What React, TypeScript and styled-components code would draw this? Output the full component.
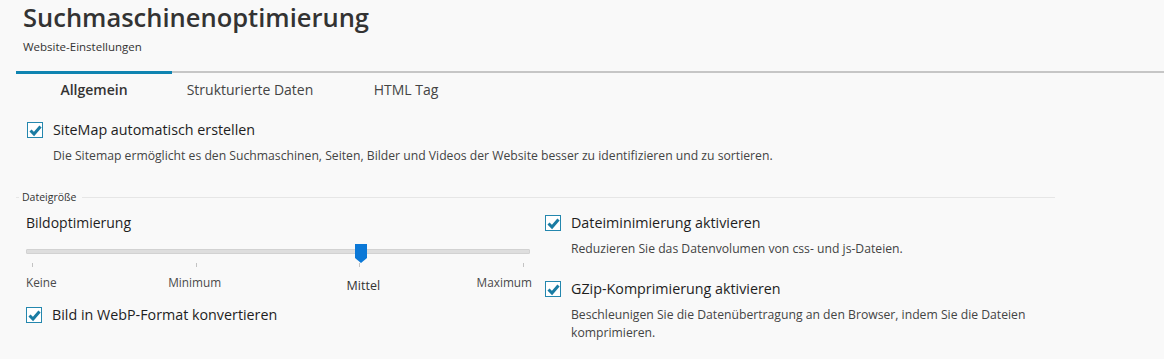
import { createGlobalStyle } from "styled-components";
import styled from "styled-components";

const GlobalStyle = createGlobalStyle`
  body {
    margin: 0;
    background: #f9f9f9;
    font-family: "Open Sans", "Noto Sans", sans-serif;
    color: #1e1e1e;
  }
`;

const color = {
  accent: "#0f84b1",
  check: "#1a7ca3",
  thumb: "#0b78d7",
  line: "#c6c6c6",
  soft: "#e6e6e6",
  text: "#1e1e1e",
  muted: "#444",
};

const Page = styled.div`
  padding: 0 0 0 16px;
  width: 1148px;
  height: 359px;
  overflow: hidden;
`;

const Header = styled.header`
  padding: 2px 0 0 7px;
`;

const Title = styled.h1`
  margin: 0;
  font-size: 25.5px;
  line-height: 30px;
  font-weight: 600;
  color: #333;
`;

const Subtitle = styled.div`
  margin-top: 7px;
  font-size: 11.5px;
  line-height: 16px;
  color: #333;
`;

const TabBar = styled.nav`
  display: flex;
  margin-top: 16px;
  border-top: 2px solid ${color.line};
`;

const Tab = styled.div<{ $active?: boolean }>`
  width: 156px;
  margin-top: -2px;
  border-top: 3px solid ${(p) => (p.$active ? color.accent : "transparent")};
  padding-top: 6px;
  text-align: center;
  font-size: 14px;
  line-height: 20px;
  font-weight: ${(p) => (p.$active ? 600 : 400)};
  color: ${(p) => (p.$active ? "#333" : "#444")};
`;

const Content = styled.div`
  width: 1039px;
  padding-top: 20px;
`;

const OptionRow = styled.label`
  display: flex;
  align-items: center;
  gap: 10px;
  font-size: 14.3px;
  line-height: 20px;
  color: ${color.text};
`;

const Description = styled.p`
  margin: 7px 0 0 26px;
  font-size: 12.2px;
  line-height: 18px;
  color: ${color.muted};
`;

const Option = styled.div<{ $indent?: number; $top?: number }>`
  padding-left: ${(p) => p.$indent ?? 11}px;
  margin-top: ${(p) => p.$top ?? 0}px;
`;

const Fieldset = styled.fieldset`
  margin: 25px 0 0;
  padding: 0;
  border: none;
  border-top: 1px solid ${color.soft};
  min-width: 0;
`;

const Legend = styled.legend`
  margin-left: 3px;
  padding: 0 6px 0 3px;
  font-size: 10.5px;
  line-height: 14px;
  color: #333;
`;

const Columns = styled.div`
  display: grid;
  grid-template-columns: 504px 1fr;
  gap: 15px;
  padding-left: 10px;
  margin-top: 9px;
`;

const Column = styled.div`
  display: flex;
  flex-direction: column;
`;

const SliderLabel = styled.div`
  font-size: 14px;
  line-height: 20px;
  color: ${color.text};
`;

const Slider = styled.div`
  width: 504px;
  margin-top: 16px;
`;

const Track = styled.div`
  position: relative;
  height: 3px;
  background: #dedede;
  border: 1px solid #d2d2d2;
  border-radius: 1px;
`;

const Thumb = styled.svg`
  position: absolute;
  top: -6px;
  margin-left: -6px;
`;

const TickRow = styled.div`
  display: flex;
  justify-content: space-between;
  padding: 0 6px;
  margin-top: 9px;
`;

const Tick = styled.span`
  width: 1px;
  height: 4px;
  background: #c3c3c3;
`;

const StepRow = styled.div`
  display: flex;
  justify-content: space-between;
  padding: 0 6px;
  margin-top: 7px;
  height: 31px;
`;

const Step = styled.span<{ $align: "start" | "center" | "end"; $selected?: boolean }>`
  width: 0;
  display: flex;
  justify-content: ${(p) =>
    p.$align === "start" ? "flex-start" : p.$align === "end" ? "flex-end" : "center"};
  margin-left: ${(p) => (p.$align === "start" ? "-6px" : "0")};
  margin-right: ${(p) => (p.$align === "end" ? "-8px" : "0")};
  margin-top: ${(p) => (p.$selected ? "4px" : "0")};
  white-space: nowrap;
  font-size: ${(p) => (p.$selected ? "12.5px" : "11.8px")};
  line-height: 16px;
  color: ${(p) => (p.$selected ? "#333" : "#4a4a4a")};
`;

const Box = styled.span`
  display: inline-flex;
  align-items: center;
  justify-content: center;
  width: 16px;
  height: 16px;
  box-sizing: border-box;
  border: 1.5px solid #2487ae;
  background: #fff;
  flex-shrink: 0;
`;

function Checkbox() {
  return (
    <Box>
      <svg width="13" height="13" viewBox="0 0 13 13">
        <path
          d="M1.5 6.5 L5 10 L11.5 2.5"
          fill="none"
          stroke={color.check}
          strokeWidth="3"
          strokeLinejoin="miter"
        />
      </svg>
    </Box>
  );
}

const steps = ["Keine", "Minimum", "Mittel", "Maximum"];
const selectedStep = 2;

export default function App() {
  const thumbLeft = 6 + (selectedStep / (steps.length - 1)) * (504 - 12);

  return (
    <Page>
      <GlobalStyle />
      <Header>
        <Title>Suchmaschinenoptimierung</Title>
        <Subtitle>Website-Einstellungen</Subtitle>
      </Header>

      <TabBar>
        <Tab $active>Allgemein</Tab>
        <Tab>Strukturierte Daten</Tab>
        <Tab>HTML Tag</Tab>
      </TabBar>

      <Content>
        <Option>
          <OptionRow>
            <Checkbox />
            SiteMap automatisch erstellen
          </OptionRow>
          <Description>
            Die Sitemap ermöglicht es den Suchmaschinen, Seiten, Bilder und Videos der Website
            besser zu identifizieren und zu sortieren.
          </Description>
        </Option>

        <Fieldset>
          <Legend>Dateigröße</Legend>
          <Columns>
            <Column>
              <SliderLabel>Bildoptimierung</SliderLabel>
              <Slider>
                <Track>
                  <Thumb
                    width="12"
                    height="20"
                    viewBox="0 0 12 20"
                    style={{ left: thumbLeft }}
                  >
                    <path d="M0 0 H12 V14 L6 19 L0 14 Z" fill={color.thumb} />
                  </Thumb>
                </Track>
                <TickRow>
                  {steps.map((s) => (
                    <Tick key={s} />
                  ))}
                </TickRow>
                <StepRow>
                  {steps.map((s, i) => (
                    <Step
                      key={s}
                      $align={i === 0 ? "start" : i === steps.length - 1 ? "end" : "center"}
                      $selected={i === selectedStep}
                    >
                      {s}
                    </Step>
                  ))}
                </StepRow>
              </Slider>
              <Option $indent={0}>
                <OptionRow>
                  <Checkbox />
                  Bild in WebP-Format konvertieren
                </OptionRow>
              </Option>
            </Column>

            <Column>
              <Option $indent={0} $top={0}>
                <OptionRow>
                  <Checkbox />
                  Dateiminimierung aktivieren
                </OptionRow>
                <Description>Reduzieren Sie das Datenvolumen von css- und js-Dateien.</Description>
              </Option>
              <Option $indent={0} $top={21}>
                <OptionRow>
                  <Checkbox />
                  GZip-Komprimierung aktivieren
                </OptionRow>
                <Description>
                  Beschleunigen Sie die Datenübertragung an den Browser, indem Sie die Dateien
                  komprimieren.
                </Description>
              </Option>
            </Column>
          </Columns>
        </Fieldset>
      </Content>
    </Page>
  );
}
